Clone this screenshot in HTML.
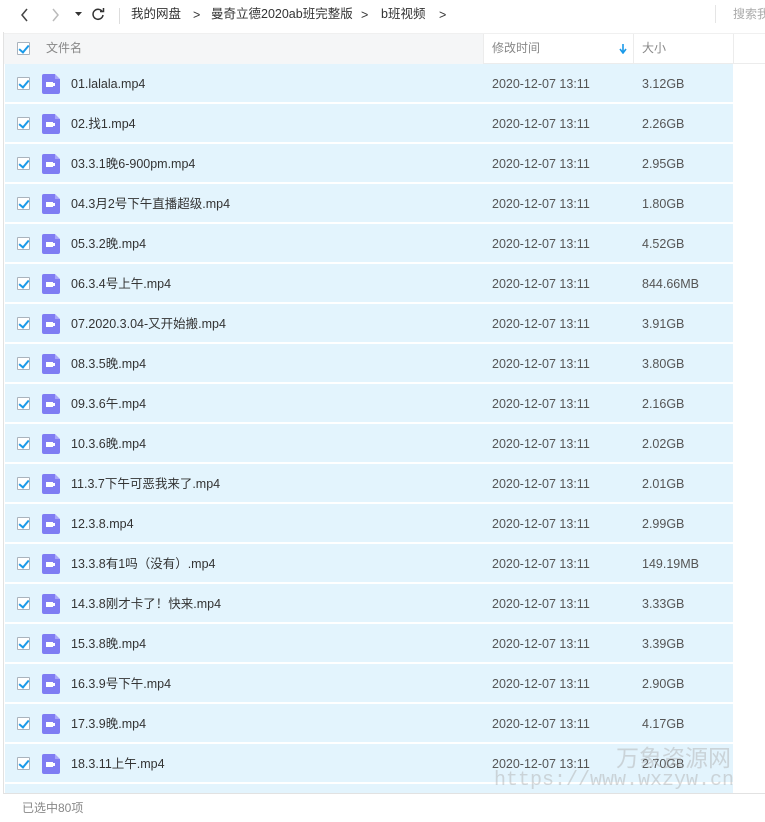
<!DOCTYPE html>
<html><head><meta charset="utf-8"><style>
*{margin:0;padding:0;box-sizing:border-box}
body{width:765px;height:817px;overflow:hidden;background:#fff;font-family:"Liberation Sans","Noto Sans CJK SC",sans-serif;font-size:12px;color:#333;position:relative}
span{white-space:nowrap}
.top{position:absolute;left:0;top:0;width:765px;height:32px}
.t{position:absolute;top:0;line-height:28px;height:28px;font-size:12.5px;color:#333}
.lb{position:absolute;left:3px;top:32px;width:1px;height:762px;background:#e2e2e2}
.hdr{position:absolute;top:33px;left:4px;width:761px;height:31px;border-bottom:1px solid #ececec;border-top:1px solid #f0f0f0}
.h1{position:absolute;left:0;top:0;width:479px;height:30px;background:#f5f6f7}
.hc{position:absolute;top:0;line-height:29px;color:#888;font-size:12px}
.vl{position:absolute;top:0;width:1px;height:30px;background:#ececec}
.row{position:absolute;left:5px;width:728px;height:38px;background:#e3f4fd}
.cb{position:absolute;left:12px;top:13px;width:13px;height:13px;border:1px solid #a9b3bd;background:#fff;border-radius:1px}
.cb:after{content:"";position:absolute;left:3px;top:0px;width:4px;height:8px;border:solid #1a9ae9;border-width:0 2px 2px 0;transform:rotate(40deg)}
.ic{position:absolute;left:37px;top:10px;width:18px;height:20px;background:#7f7cf3;border-radius:2px}
.ic:before{content:"";position:absolute;right:0;top:0;border-style:solid;border-width:0 5px 5px 0;border-color:#e3f4fd #e3f4fd #a9a6fa #a9a6fa}
.ic:after{content:"";position:absolute;left:4px;top:8px;width:7px;height:5px;background:#fff;box-shadow:3px 0 0 -1px #fff}
.n,.d,.s{position:absolute;top:0;line-height:40px;height:38px;font-size:12.5px}
.n{left:66px;color:#333}
.d{left:487px;color:#555}
.s{left:637px;color:#555}
.foot{position:absolute;left:3px;top:793px;width:762px;height:24px;border-top:1px solid #e2e2e2}
.wm{position:absolute;color:rgba(170,170,170,.45);font-family:"Liberation Mono","Noto Sans CJK SC",monospace;white-space:nowrap}
</style></head><body>
<div class="top">
<svg style="position:absolute;left:20px;top:8px" width="10" height="14"><path d="M7 1L2 7L7 13" stroke="#444" stroke-width="1.5" fill="none"/></svg>
<svg style="position:absolute;left:50px;top:8px" width="10" height="14"><path d="M3 1L8 7L3 13" stroke="#bbb" stroke-width="1.5" fill="none"/></svg>
<svg style="position:absolute;left:75px;top:12px" width="7" height="5"><path d="M0 0H7L3.5 4Z" fill="#333"/></svg>
<svg style="position:absolute;left:91px;top:7px" width="14" height="14"><path d="M11.5 5A5 5 0 1 0 12 8" stroke="#333" stroke-width="1.5" fill="none"/><path d="M9 4.5H12.5V1" stroke="#333" stroke-width="1.5" fill="none"/></svg>
<div style="position:absolute;left:119px;top:8px;width:1px;height:16px;background:#ddd"></div>
<span class="t" style="left:131px">我的网盘</span>
<span class="t" style="left:193px;top:1px">&gt;</span>
<span class="t" style="left:211px">曼奇立德2020ab班完整版</span>
<span class="t" style="left:361px;top:1px">&gt;</span>
<span class="t" style="left:381px">b班视频</span>
<span class="t" style="left:439px;top:1px">&gt;</span>
<div style="position:absolute;left:715px;top:5px;width:1px;height:18px;background:#e5e5e5"></div>
<span class="t" style="left:733px;color:#aaa;font-size:12px">搜索我</span>
</div>
<div class="lb"></div>
<div class="hdr"><div class="h1"></div>
<div class="cb" style="left:13px;top:8px"></div>
<span class="hc" style="left:42px">文件名</span>
<div class="vl" style="left:479px"></div>
<span class="hc" style="left:488px">修改时间</span>
<svg style="position:absolute;left:615px;top:10px" width="8" height="10"><path d="M4 0V8M1 5L4 9L7 5" stroke="#1a9ae9" stroke-width="1.6" fill="none"/></svg>
<div class="vl" style="left:629px"></div>
<span class="hc" style="left:638px">大小</span>
<div class="vl" style="left:729px"></div>
</div>
<div class="row" style="top:64px"><div class="cb"></div><div class="ic"></div><span class="n">01.lalala.mp4</span><span class="d">2020-12-07 13:11</span><span class="s">3.12GB</span></div>
<div class="row" style="top:104px"><div class="cb"></div><div class="ic"></div><span class="n">02.找1.mp4</span><span class="d">2020-12-07 13:11</span><span class="s">2.26GB</span></div>
<div class="row" style="top:144px"><div class="cb"></div><div class="ic"></div><span class="n">03.3.1晚6-900pm.mp4</span><span class="d">2020-12-07 13:11</span><span class="s">2.95GB</span></div>
<div class="row" style="top:184px"><div class="cb"></div><div class="ic"></div><span class="n">04.3月2号下午直播超级.mp4</span><span class="d">2020-12-07 13:11</span><span class="s">1.80GB</span></div>
<div class="row" style="top:224px"><div class="cb"></div><div class="ic"></div><span class="n">05.3.2晚.mp4</span><span class="d">2020-12-07 13:11</span><span class="s">4.52GB</span></div>
<div class="row" style="top:264px"><div class="cb"></div><div class="ic"></div><span class="n">06.3.4号上午.mp4</span><span class="d">2020-12-07 13:11</span><span class="s">844.66MB</span></div>
<div class="row" style="top:304px"><div class="cb"></div><div class="ic"></div><span class="n">07.2020.3.04-又开始搬.mp4</span><span class="d">2020-12-07 13:11</span><span class="s">3.91GB</span></div>
<div class="row" style="top:344px"><div class="cb"></div><div class="ic"></div><span class="n">08.3.5晚.mp4</span><span class="d">2020-12-07 13:11</span><span class="s">3.80GB</span></div>
<div class="row" style="top:384px"><div class="cb"></div><div class="ic"></div><span class="n">09.3.6午.mp4</span><span class="d">2020-12-07 13:11</span><span class="s">2.16GB</span></div>
<div class="row" style="top:424px"><div class="cb"></div><div class="ic"></div><span class="n">10.3.6晚.mp4</span><span class="d">2020-12-07 13:11</span><span class="s">2.02GB</span></div>
<div class="row" style="top:464px"><div class="cb"></div><div class="ic"></div><span class="n">11.3.7下午可恶我来了.mp4</span><span class="d">2020-12-07 13:11</span><span class="s">2.01GB</span></div>
<div class="row" style="top:504px"><div class="cb"></div><div class="ic"></div><span class="n">12.3.8.mp4</span><span class="d">2020-12-07 13:11</span><span class="s">2.99GB</span></div>
<div class="row" style="top:544px"><div class="cb"></div><div class="ic"></div><span class="n">13.3.8有1吗（没有）.mp4</span><span class="d">2020-12-07 13:11</span><span class="s">149.19MB</span></div>
<div class="row" style="top:584px"><div class="cb"></div><div class="ic"></div><span class="n">14.3.8刚才卡了！快来.mp4</span><span class="d">2020-12-07 13:11</span><span class="s">3.33GB</span></div>
<div class="row" style="top:624px"><div class="cb"></div><div class="ic"></div><span class="n">15.3.8晚.mp4</span><span class="d">2020-12-07 13:11</span><span class="s">3.39GB</span></div>
<div class="row" style="top:664px"><div class="cb"></div><div class="ic"></div><span class="n">16.3.9号下午.mp4</span><span class="d">2020-12-07 13:11</span><span class="s">2.90GB</span></div>
<div class="row" style="top:704px"><div class="cb"></div><div class="ic"></div><span class="n">17.3.9晚.mp4</span><span class="d">2020-12-07 13:11</span><span class="s">4.17GB</span></div>
<div class="row" style="top:744px"><div class="cb"></div><div class="ic"></div><span class="n">18.3.11上午.mp4</span><span class="d">2020-12-07 13:11</span><span class="s">2.70GB</span></div>
<div class="row" style="top:784px;height:9px"></div>
<div class="wm" style="left:616px;top:741px;font-size:23px;font-family:'Noto Sans CJK SC',sans-serif;line-height:30px">万象资源网</div>
<div class="wm" style="left:494px;top:769px;font-size:20px;line-height:24px">https://www.wxzyw.cn</div>
<div class="foot"><span style="position:absolute;left:19px;top:0;line-height:28px;color:#888;font-size:12px">已选中80项</span></div>
</body></html>
